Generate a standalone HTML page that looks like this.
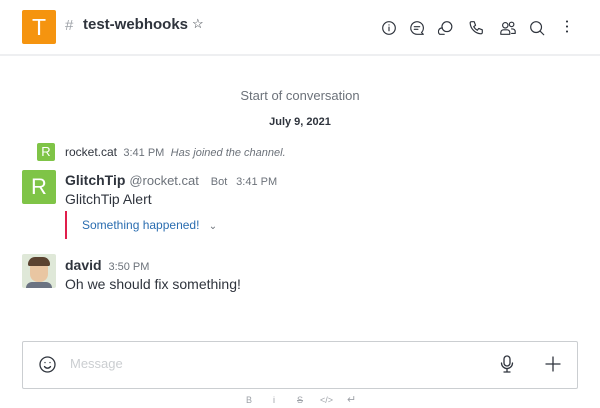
<!DOCTYPE html>
<html><head><style>
*{margin:0;padding:0;box-sizing:border-box}
body{width:600px;height:408px;background:#fff;font-family:"Liberation Sans",sans-serif;color:#2f343d;position:relative;overflow:hidden}
.a{position:absolute}
svg{position:absolute;fill:none;stroke:#2f343d;stroke-width:1.3;stroke-linecap:round;stroke-linejoin:round}
.h svg{transform:scale(.9)}
</style></head><body>
<div class="a" style="left:22px;top:10px;width:34px;height:34px;background:#f5940f;border-radius:2px;color:#fff;font-size:23px;font-weight:300;text-align:center;line-height:34px">T</div>
<div class="a" style="left:65px;top:17px;font-size:15px;color:#9ea2a8">#</div>
<div class="a" style="left:83px;top:16px;font-size:15px;font-weight:bold;color:#2f343d">test-webhooks</div>
<div class="a" style="left:192px;top:16px;font-size:13px;color:#2f343d">☆</div>
<div class="h">
<svg style="left:380px;top:19px" width="18" height="18"><circle cx="9" cy="9" r="7"/><path d="M9 8v4M9 5.5v.1"/></svg>
<svg style="left:408px;top:19px" width="18" height="18"><path d="M16 16l-2-2A7 7 0 1 0 9 16z"/><path d="M6 7.5h6M6 10.5h4"/></svg>
<svg style="left:437px;top:19px" width="18" height="18"><circle cx="10" cy="7.5" r="5.5"/><path d="M5 9a4 4 0 0 0-3 7h5"/></svg>
<svg style="left:467px;top:19px" width="18" height="18"><path d="M4 2l3 0 1.5 4-2 1.5a9 9 0 0 0 4 4l1.5-2 4 1.5v3a1.5 1.5 0 0 1-1.5 1.5C8 15 3 10 2.5 3.5A1.5 1.5 0 0 1 4 2z"/></svg>
<svg style="left:498px;top:19px" width="20" height="18"><circle cx="7" cy="6" r="3"/><circle cx="14" cy="5" r="2.5"/><path d="M2 16v-2a3 3 0 0 1 3-3h4a3 3 0 0 1 3 3v2zM14 10h1a3 3 0 0 1 3 3v2h-4"/></svg>
<svg style="left:528px;top:19px" width="18" height="18"><circle cx="8" cy="8" r="6"/><path d="M12.5 12.5l4 4"/></svg>
</div>
<div class="a" style="left:566px;top:19px;width:2px;height:14px;background:radial-gradient(circle,#2f343d 0.9px,transparent 1.2px) 0 0/2px 5px"></div>
<div class="a" style="left:0;top:54px;width:600px;height:2px;background:#eeeff1"></div>
<div class="a" style="left:0;top:88px;width:600px;text-align:center;font-size:13px;color:#6c727a">Start of conversation</div>
<div class="a" style="left:0;top:116px;width:600px;text-align:center;font-size:11px;font-weight:bold;color:#2f343d">July 9, 2021</div>
<div class="a" style="left:37px;top:143px;width:18px;height:18px;background:#7fc447;border-radius:2px;color:#fff;font-size:13px;text-align:center;line-height:18px">R</div>
<div class="a" style="left:65px;top:145px;font-size:12px;color:#2f343d">rocket.cat <span style="color:#6c727a;font-size:11px;margin-left:3px">3:41 PM</span> <i style="color:#6c727a;font-size:11px;margin-left:3px">Has joined the channel.</i></div>
<div class="a" style="left:22px;top:170px;width:34px;height:34px;background:#7fc447;border-radius:2px;color:#fff;font-size:22px;text-align:center;line-height:34px">R</div>
<div class="a" style="left:65px;top:172px;font-size:14px;font-weight:bold;color:#2f343d">GlitchTip <span style="font-weight:normal;color:#6c727a;font-size:13px">@rocket.cat</span> <span style="font-weight:normal;color:#6c727a;font-size:11px;margin-left:8px">Bot</span> <span style="font-weight:normal;color:#6c727a;font-size:11px;margin-left:5px">3:41 PM</span></div>
<div class="a" style="left:65px;top:191px;font-size:14px;color:#2f343d">GlitchTip Alert</div>
<div class="a" style="left:65px;top:211px;width:2px;height:28px;background:#e01e4b"></div>
<div class="a" style="left:82px;top:218px;font-size:12px;color:#2a6db0">Something happened! <span style="color:#6c727a;margin-left:6px;font-size:10px">⌄</span></div>
<div class="a" style="left:22px;top:254px;width:34px;height:34px;background:#dfe8d8;border-radius:2px;overflow:hidden"><div style="position:absolute;left:8px;top:6px;width:18px;height:22px;background:#e9c6a2;border-radius:8px"></div><div style="position:absolute;left:6px;top:3px;width:22px;height:9px;background:#5b4330;border-radius:8px 8px 2px 2px"></div><div style="position:absolute;left:4px;top:28px;width:26px;height:8px;background:#6b7382;border-radius:6px 6px 0 0"></div></div>
<div class="a" style="left:65px;top:257px;font-size:14px;font-weight:bold;color:#2f343d">david <span style="font-weight:normal;color:#6c727a;font-size:11px;margin-left:3px">3:50 PM</span></div>
<div class="a" style="left:65px;top:276px;font-size:14px;color:#2f343d">Oh we should fix something!</div>
<div class="a" style="left:22px;top:341px;width:556px;height:48px;border:1px solid #cbced1;border-radius:2px"></div>
<svg style="left:38px;top:355px" width="19" height="19"><circle cx="9.5" cy="9.5" r="7.5"/><path d="M6.5 11.5a3.5 3.5 0 0 0 6 0M7 7.5v.1M12 7.5v.1"/></svg>
<div class="a" style="left:70px;top:356px;font-size:13px;color:#cbced1">Message</div>
<svg style="left:498px;top:354px" width="18" height="20"><rect x="6" y="2" width="6" height="10" rx="3"/><path d="M3.5 9a5.5 5.5 0 0 0 11 0M9 14.5v3.5M6 18h6"/></svg>
<svg style="left:544px;top:355px" width="18" height="18"><path d="M9 2v14M2 9h14"/></svg>
<div class="a" style="left:246px;top:395px;font-size:9px;color:#9ea2a8">B</div>
<div class="a" style="left:273px;top:395px;font-size:9px;color:#9ea2a8">i</div>
<div class="a" style="left:297px;top:395px;font-size:9px;color:#9ea2a8;text-decoration:line-through">S</div>
<div class="a" style="left:320px;top:395px;font-size:9px;color:#9ea2a8">&lt;/&gt;</div>
<div class="a" style="left:347px;top:393px;font-size:11px;color:#9ea2a8">↵</div>
</body></html>
